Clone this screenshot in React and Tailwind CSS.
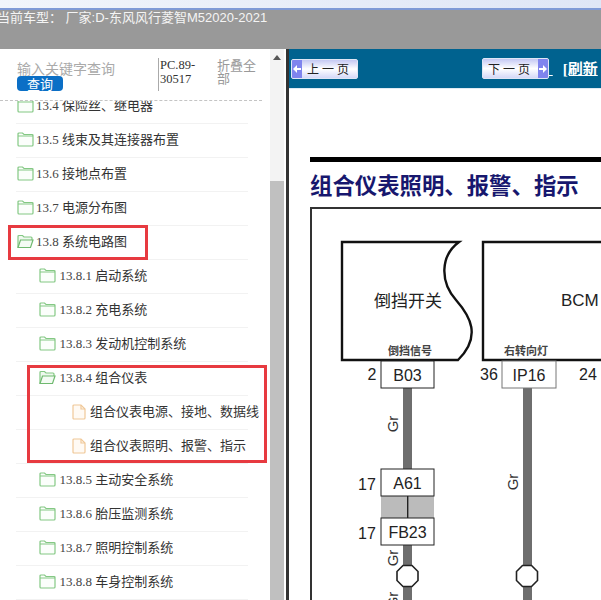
const cjk = '"Noto Sans CJK SC", sans-serif';
const serif = '"Liberation Serif", "Noto Sans CJK SC", serif';
const sans = '"Liberation Sans", "Noto Sans CJK SC", sans-serif';

function Folder({ open }) {
  return (
    <svg width="17" height="15" viewBox="0 0 17 15" fill="none" stroke="#84c884" strokeWidth="1.2" className="shrink-0">
      {open ? (
        <>
          <path d="M1 13.5V2.5q0-1 1-1h3.5l1.5 1.5h7q1 0 1 1V6" fill="#eef8ee" />
          <path d="M1 13.5L3.5 6H16l-2.5 7.5H1z" fill="#f4fbf4" stroke="#6fb96f" />
        </>
      ) : (
        <path d="M1 3v10q0 1 1 1h13q1 0 1-1V3.5q0-1-1-1H7L5.5 1H2q-1 0-1 1zM1 4h15" fill="#fbfefb" />
      )}
    </svg>
  );
}

function FileIcon() {
  return (
    <svg width="14" height="16" viewBox="0 0 14 16" fill="#fffaf4" stroke="#f0c898" strokeWidth="1.2" className="shrink-0">
      <path d="M1 2q0-1 1-1h7l4 4v9q0 1-1 1H2q-1 0-1-1z" />
      <path d="M9 1v4h4" fill="none" />
    </svg>
  );
}

function Row({ num, label, level = 0, open, file }) {
  const pad = level === 0 ? 'pl-[1px]' : level === 1 ? 'pl-[23px]' : 'pl-[56px]';
  const gap = file ? 'ml-[4px]' : level === 1 ? 'ml-[3.5px]' : 'ml-[2px]';
  return (
    <div className={`h-[34px] ml-[16px] w-[232px] border-b border-[#f2f2f2] flex items-center pb-[2px] whitespace-nowrap text-[13px] text-[#333] ${pad}`}>
      {file ? <FileIcon /> : <Folder open={open} />}
      <span className={gap}>
        {num && <span className="text-[#444]">{num} </span>}
        {label}
      </span>
    </div>
  );
}

const rows = [
  { num: '13.4', label: '保险丝、继电器' },
  { num: '13.5', label: '线束及其连接器布置' },
  { num: '13.6', label: '接地点布置' },
  { num: '13.7', label: '电源分布图' },
  { num: '13.8', label: '系统电路图', open: true },
  { num: '13.8.1', label: '启动系统', level: 1 },
  { num: '13.8.2', label: '充电系统', level: 1 },
  { num: '13.8.3', label: '发动机控制系统', level: 1 },
  { num: '13.8.4', label: '组合仪表', level: 1, open: true },
  { label: '组合仪表电源、接地、数据线', level: 2, file: true },
  { label: '组合仪表照明、报警、指示', level: 2, file: true },
  { num: '13.8.5', label: '主动安全系统', level: 1 },
  { num: '13.8.6', label: '胎压监测系统', level: 1 },
  { num: '13.8.7', label: '照明控制系统', level: 1 },
  { num: '13.8.8', label: '车身控制系统', level: 1 },
];

function PageButton({ label, right }) {
  const arrow = (
    <span className="w-[10px] self-stretch bg-[#7f84ee] flex items-center justify-center">
      <svg width="8" height="8" viewBox="0 0 8 8" fill="#fff">
        {right ? <path d="M0 3h4V0l4 4-4 4V5H0z" /> : <path d="M8 3H4V0L0 4l4 4V5h4z" />}
      </svg>
    </span>
  );
  return (
    <div className={`flex items-stretch w-[67px] border border-[#dfe6f5] rounded-[2px] overflow-hidden text-[12px] text-[#222] ${right ? 'h-[21px]' : 'h-[20px]'} bg-gradient-to-b from-[#c4c8f3] via-[#ffffff] to-[#d4d8f7]`}>
      {!right && arrow}
      <span className="flex-1 flex items-center justify-center tracking-[3px]" style={{ fontFamily: cjk }}>{label}</span>
      {right && arrow}
    </div>
  );
}

function Box({ x, y, w = 53, h = 27, label, stroke = '#222' }) {
  return (
    <g>
      <rect x={x} y={y} width={w} height={h} fill="#fff" stroke={stroke} strokeWidth="1" />
      <text x={x + w / 2} y={y + h / 2 + 6} textAnchor="middle" fontSize="16" fill="#222">{label}</text>
    </g>
  );
}

function Oct({ cx, cy }) {
  const a = 10.5, b = 4.5;
  const pts = [[-b,-a],[b,-a],[a,-b],[a,b],[b,a],[-b,a],[-a,b],[-a,-b]].map(([px, py]) => `${cx + px},${cy + py}`).join(' ');
  return <polygon points={pts} fill="#fff" stroke="#222" strokeWidth="1.6" />;
}

function Gr({ x, y }) {
  return <text transform={`translate(${x} ${y}) rotate(-90)`} textAnchor="middle" fontSize="15" fill="#333">Gr</text>;
}

function Diagram() {
  return (
    <svg width="312" height="393" viewBox="289 207 312 393" className="block" style={{ fontFamily: sans }}>
      <path d="M311 600V208H601" fill="none" stroke="#333" strokeWidth="2" />
      <rect x="403" y="387" width="9" height="213" fill="#6e6e6e" />
      <rect x="523" y="387" width="9" height="213" fill="#6e6e6e" />

      <path d="M342 242H459C440 256 440 282 456 300C470 316 482 336 458 360H342Z" fill="#fff" stroke="#111" strokeWidth="2.4" />
      <text x="408" y="307" textAnchor="middle" fontSize="17" fill="#222">倒挡开关</text>
      <text x="410" y="355" textAnchor="middle" fontSize="11" fontWeight="700" fill="#444">倒挡信号</text>

      <path d="M601 242H483V360H601" fill="#fff" stroke="#111" strokeWidth="2.4" />
      <text x="561" y="306" fontSize="17" fill="#222">BCM</text>
      <text x="526" y="355" textAnchor="middle" fontSize="11" fontWeight="700" fill="#444">右转向灯</text>

      <Box x={381} y={361} label="B03" />
      <Box x={502} y={361} w={54} label="IP16" stroke="#777" />
      <text x="372" y="380" textAnchor="middle" fontSize="16" fill="#222">2</text>
      <text x="489" y="380" textAnchor="middle" fontSize="16" fill="#222">36</text>
      <text x="588" y="380" textAnchor="middle" fontSize="16" fill="#222">24</text>

      <Gr x={398} y={424} />
      <Gr x={518} y={482} />

      <rect x="381" y="496" width="53" height="22" fill="#bbb" />
      <rect x="407" y="496" width="1.4" height="22" fill="#222" />
      <Box x={381} y={469} label="A61" />
      <Box x={381} y={518} label="FB23" />
      <text x="367" y="490" textAnchor="middle" fontSize="16" fill="#222">17</text>
      <text x="367" y="539" textAnchor="middle" fontSize="16" fill="#222">17</text>

      <Gr x={398} y={558} />
      <Oct cx={407.5} cy={576} />
      <Oct cx={527} cy={576} />
      <Gr x={398} y={600} />
    </svg>
  );
}

export default function App() {
  return (
    <div className="w-[601px] h-[600px] overflow-hidden flex flex-col bg-white" style={{ fontFamily: serif }}>
      <div className="h-[8px] shrink-0 bg-gradient-to-r from-[#f1f5fb] to-[#dfe6f6]" />
      <div className="h-[2px] shrink-0 bg-[#7f9ad6]" />
      <div className="h-[39px] shrink-0 bg-[#999999] text-[#f4f4f4] text-[13px] leading-[16px] whitespace-nowrap -ml-[3px]" style={{ fontFamily: sans }}>
        当前车型： 厂家:D-东风风行菱智M52020-2021
      </div>
      <div className="flex-1 min-h-0 flex">
        <div className="relative w-[270px] shrink-0 flex flex-col">
          <div className="h-[52px] shrink-0 mr-[8px] border-b border-dashed border-[#c4c4c4] flex pl-[17px] pt-[9px]">
            <div className="w-[141px] shrink-0 pt-[2px]" style={{ fontFamily: cjk }}>
              <div className="text-[14px] leading-[16px] text-[#aaa]">输入关键字查询</div>
              <div className="w-[46px] h-[15px] rounded-[4px] bg-[#0b6fc6] text-white text-[13px] leading-[15px] text-center">查询</div>
            </div>
            <div className="w-[59px] shrink-0 h-[33px] border-l border-[#aaa] pl-[1px] text-[12.5px] leading-[14px] text-[#333]">PC.89-<br />30517</div>
            <div className="w-[40px] shrink-0 text-[13px] leading-[13px] text-[#999]" style={{ fontFamily: cjk }}>折叠全部</div>
          </div>
          <div className="flex-1 min-h-0 overflow-hidden">
            <div className="-mt-[11px]" style={{ fontFamily: serif }}>
              {rows.map((r, i) => <Row key={i} {...r} />)}
            </div>
          </div>
          <div className="absolute left-[8px] top-[176px] w-[140px] h-[35px] border-[3px] border-[#e73a40]" />
          <div className="absolute left-[27px] top-[316px] w-[240px] h-[98px] border-[3px] border-[#e73a40]" />
        </div>
        <div className="w-[14px] shrink-0 flex flex-col bg-[#f3f3f3]">
          <div className="h-[132px] flex justify-center pt-[6px]">
            <svg width="8" height="5" viewBox="0 0 8 5" fill="#555"><path d="M4 0l4 5H0z" /></svg>
          </div>
          <div className="flex-1 bg-[#c0c0c0]" />
        </div>
        <div className="w-[2px] shrink-0" />
        <div className="w-[3px] shrink-0 bg-[#333]" />
        <div className="flex-1 min-w-0 flex flex-col">
          <div className="h-[40px] shrink-0 bg-[#00628f] border-b border-[#dfeaf2] flex items-center pl-[2px] whitespace-nowrap overflow-hidden">
            <PageButton label="上一页" />
            <div className="w-[124px] shrink-0" />
            <PageButton label="下一页" right />
            <span className="text-white underline text-[15px] self-end pb-[8px]">{'\u00a0'}</span>
            <span className="ml-[10px] text-white underline font-bold text-[15px] self-end pb-[8px]">[刷新</span>
          </div>
          <div className="flex-1 min-h-0 overflow-hidden">
            <div className="h-[73px] ml-[21px] flex items-end">
              <div className="w-full h-[5px] bg-black" />
            </div>
            <div className="h-[45px] pl-[21px] pt-[10px] text-[22.4px] leading-[30px] font-bold text-[#17176e] whitespace-nowrap" style={{ fontFamily: sans }}>
              组合仪表照明、报警、指示
            </div>
            <Diagram />
          </div>
        </div>
      </div>
    </div>
  );
}
